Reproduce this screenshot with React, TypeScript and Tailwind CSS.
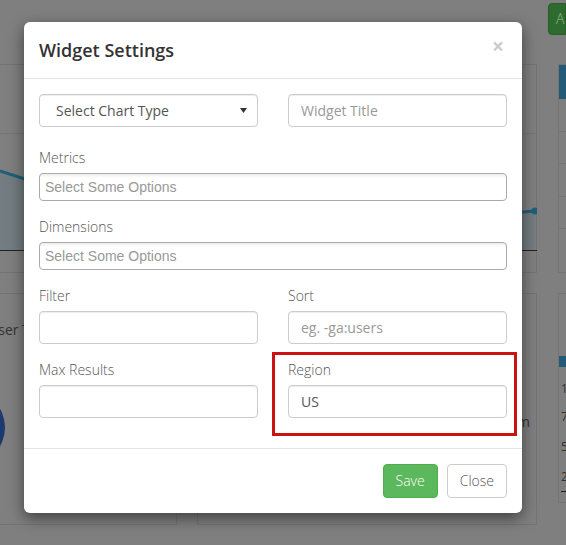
import React from 'react';

const sans = "font-['Open_Sans',sans-serif]";

const Label = ({ children }: { children: React.ReactNode }) => (
  <label className="block h-5 mb-[5px] text-sm leading-5 font-light text-[#555]">{children}</label>
);

const TextInput = ({ placeholder, value }: { placeholder?: string; value?: string }) => (
  <input
    type="text"
    readOnly
    placeholder={placeholder}
    defaultValue={value}
    className="block w-full h-[33px] px-3 rounded border border-[#ccc] bg-white text-sm text-[#555] shadow-[inset_0_1px_1px_rgba(0,0,0,0.075)] outline-none placeholder:text-[#999]"
  />
);

const ChosenBox = () => (
  <div className="h-[28px] w-full rounded-[4px] border border-[#aaa] bg-[linear-gradient(#eee_1%,#fff_15%)] px-[5px] flex items-center">
    <span className="font-['Liberation_Sans',Arial,sans-serif] text-sm text-[#999]">Select Some Options</span>
  </div>
);

function Background() {
  return (
    <div className="absolute inset-0 bg-[#7f7f7f] flex flex-col">
      {/* top bar */}
      <div className="h-[64px] flex justify-end items-start pt-[3px]">
        <div className="h-[32px] w-[18px] rounded-l-[4px] bg-[#2e6b2e] border border-[#285c28] pl-[7px] pt-[5px] text-sm text-[#9cb89c] font-light">A</div>
      </div>
      <div className="flex gap-[21px]">
        {/* left column */}
        <div className="w-[538px] -ml-px flex flex-col gap-[20px]">
          <div className="h-[209px] border border-[#747474] flex flex-col">
            <div className="h-[69px] border-b border-[#767676]" />
            <svg width="537" height="117" viewBox="0 0 537 117" className="block">
              <path d="M0 37 L40 50 L500 80 L535 77 L535 116 L0 116 Z" fill="#737c80" />
              <path d="M0 37 L40 50 L500 80 L535 77" fill="none" stroke="#1f5f7a" strokeWidth="3" />
              <circle cx="535" cy="77" r="3.5" fill="#1f5f7a" />
              <line x1="0" y1="116.5" x2="537" y2="116.5" stroke="#222" strokeWidth="1" />
            </svg>
          </div>
          <div className="h-[232px] flex gap-[20px]">
            <div className="w-[178px] border border-[#747474] pt-[26px] relative overflow-hidden">
              <div className="text-sm text-[#333] leading-5 -ml-[12px]">User Type</div>
              <div className="mt-[50px] -ml-[70px] w-[75px] h-[75px] rounded-full bg-[#1c3a6e]" />
            </div>
            <div className="flex-1 border border-[#747474] flex flex-col items-end pr-[6px] pt-[118px]">
              <div className="text-sm text-[#333] leading-5">m</div>
            </div>
          </div>
        </div>
        {/* right column */}
        <div className="flex-1 flex flex-col gap-[20px]">
          <div className="h-[209px] border border-[#747474] flex flex-col">
            <div className="h-[34px] bg-[#235a78]" />
            <div className="h-[33px] border-b border-[#767676]" />
            <div className="h-[32px] border-b border-[#767676]" />
            <div className="h-[33px] border-b border-[#767676]" />
            <div className="h-[32px] border-b border-[#767676]" />
          </div>
          <div className="h-[210px] border border-[#747474] pt-[62px] pl-[2px] text-xs text-[#333]">
            <div className="h-[11px] bg-[#235a78] -ml-[2px]" />
            <div className="mt-[14px]">1</div>
            <div className="mt-[12px]">7</div>
            <div className="mt-[14px]">5</div>
            <div className="mt-[14px]">2</div>
            <div className="mt-[6px] border-t border-[#222]" />
          </div>
        </div>
      </div>
    </div>
  );
}

export default function App() {
  return (
    <div className={`relative w-[566px] h-[545px] overflow-hidden ${sans}`}>
      <Background />

      {/* modal */}
      <div className="absolute left-[24px] top-[22px] w-[498px] rounded-[6px] bg-white shadow-[0_5px_15px_rgba(0,0,0,0.5)]">
        <div className="flex items-start justify-between p-[15px] border-b border-[#e5e5e5]">
          <h4 className="text-[18px] leading-[26px] font-semibold text-[#333]">Widget Settings</h4>
          <span className="text-[21px] leading-[20px] font-bold text-black opacity-20 -mt-px mr-[3px]">×</span>
        </div>

        <div className="p-[15px]">
          <div className="grid grid-cols-2 gap-x-[30px] mb-[21px]">
            <div className="h-[33px] rounded border border-[#ccc] bg-white flex items-center justify-between pl-[16px] pr-[10px] shadow-[inset_0_1px_1px_rgba(0,0,0,0.075)]">
              <span className="text-sm text-[#555]">Select Chart Type</span>
              <svg width="7" height="5" viewBox="0 0 7 5"><path d="M0 0 L7 0 L3.5 5 Z" fill="#333" /></svg>
            </div>
            <TextInput placeholder="Widget Title" />
          </div>

          <div className="mb-[16px]">
            <Label>Metrics</Label>
            <ChosenBox />
          </div>
          <div className="mb-[16px]">
            <Label>Dimensions</Label>
            <ChosenBox />
          </div>

          <div className="grid grid-cols-2 gap-x-[30px] gap-y-[16px] mb-[15px]">
            <div>
              <Label>Filter</Label>
              <TextInput />
            </div>
            <div>
              <Label>Sort</Label>
              <TextInput placeholder="eg. -ga:users" />
            </div>
            <div>
              <Label>Max Results</Label>
              <TextInput />
            </div>
            <div>
              <Label>Region</Label>
              <TextInput value="US" />
            </div>
          </div>
        </div>

        <div className="flex justify-end gap-[9px] p-[15px] border-t border-[#e5e5e5]">
          <button className="h-[34px] px-3 rounded border border-[#4cae4c] bg-[#5cb85c] text-sm font-light text-white">Save</button>
          <button className="h-[34px] px-3 rounded border border-[#ccc] bg-white text-sm font-light text-[#555]">Close</button>
        </div>

        {/* highlight annotation */}
        <div className="absolute left-[248px] top-[330px] w-[245px] h-[84px] border-[3px] border-[#cc1111] pointer-events-none" />
      </div>
    </div>
  );
}
